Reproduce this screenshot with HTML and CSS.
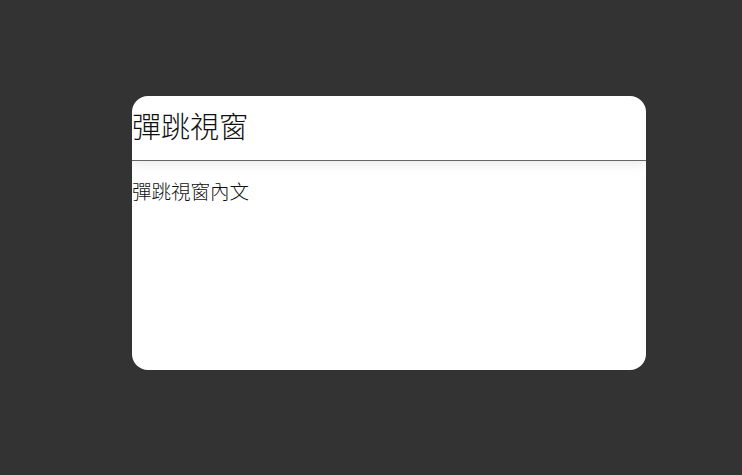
FILE: index.html
```html
<!DOCTYPE html>
<html lang="zh-Hant">
  <head>
    <meta charset="UTF-8" />
    <meta name="viewport" content="width=device-width, initial-scale=1.0" />
    <title>彈跳視窗</title>
    <link rel="stylesheet" href="styles.css">
  </head>
  <body>
    <div class="modal">
      <header class="modal-header">
        <h2>彈跳視窗</h2>
      </header>
      <section class="modal-body">
        <p>彈跳視窗內文</p>
      </section>
    </div>
  </body>
</html>
```

FILE: styles.css
```css
body {
  margin: 0;
  height: 100vh;
  background-color: #333;
  font-family: "Noto Sans CJK TC", "Noto Sans", sans-serif;
  color: #111;
}
.modal {
  margin: 96px 0 0 132px;
  width: 514px;
  height: 274px;
  background-color: #fff;
  border-radius: 16px;
  overflow: hidden;
}
.modal-header {
  height: 65px;
  display: flex;
  align-items: center;
  padding-bottom: 6px;
  box-sizing: border-box;
  border-bottom: 1px solid #666;
  box-shadow: 0 4px 10px rgba(0, 0, 0, 0.08);
}
.modal-header h2 {
  margin: 0;
  font-size: 29px;
  font-weight: 300;
}
.modal-body p {
  margin: 15px 0 0;
  font-size: 19.5px;
  font-weight: 300;
}
```
